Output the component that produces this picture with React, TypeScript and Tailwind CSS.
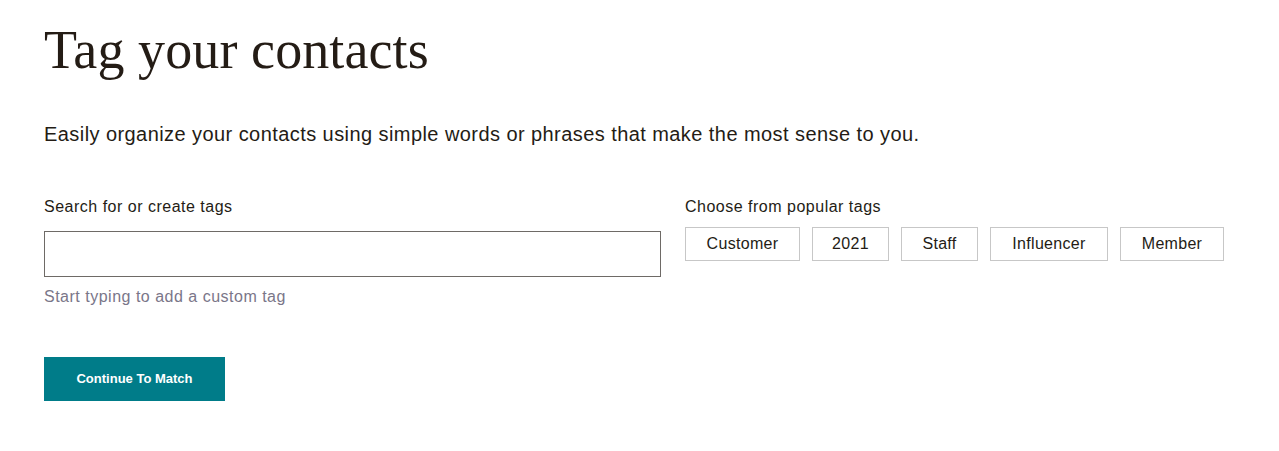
export default function App() {
  const tags = [
    { label: 'Customer', width: 'w-[115px]' },
    { label: '2021', width: 'w-[77px]' },
    { label: 'Staff', width: 'w-[77px]' },
    { label: 'Influencer', width: 'w-[118px]' },
    { label: 'Member', width: 'w-[104px]' },
  ]

  return (
    <div className="min-h-[451px] bg-white px-[44px] pt-[20px] text-[#241c15] font-['Liberation_Sans',Arial,sans-serif]">
      <h1 className="font-['Liberation_Serif','Times_New_Roman',serif] text-[54px] leading-[60px] font-normal tracking-[0.1px]">
        Tag your contacts
      </h1>

      <p className="mt-[40px] text-[20px] leading-[28px] tracking-[0.43px]">
        Easily organize your contacts using simple words or phrases that make the most sense to you.
      </p>

      <div className="mt-[49px] grid grid-cols-[617px_1fr] gap-6">
        {/* Search */}
        <div>
          <label className="block text-[16px] leading-[20px] tracking-[0.5px]">Search for or create tags</label>
          <input
            type="text"
            className="mt-[14px] block h-[46px] w-full border border-[#6e6a66] px-3 text-[16px] outline-none"
          />
          <p className="mt-[10px] text-[16px] leading-[20px] tracking-[0.5px] text-[#7a7689]">
            Start typing to add a custom tag
          </p>
        </div>

        {/* Popular tags */}
        <div>
          <p className="text-[16px] leading-[20px] tracking-[0.5px]">Choose from popular tags</p>
          <div className="mt-[10px] flex gap-3">
            {tags.map((tag) => (
              <button
                key={tag.label}
                className={`flex h-[34px] ${tag.width} items-center justify-center border border-[#c7c7c7] bg-white text-[16px] leading-none tracking-[0.3px] text-[#241c15]`}
              >
                {tag.label}
              </button>
            ))}
          </div>
        </div>
      </div>

      <button className="mt-[50px] h-[44px] w-[181px] bg-[#007c89] text-[13px] font-bold text-white">
        Continue To Match
      </button>
    </div>
  )
}
